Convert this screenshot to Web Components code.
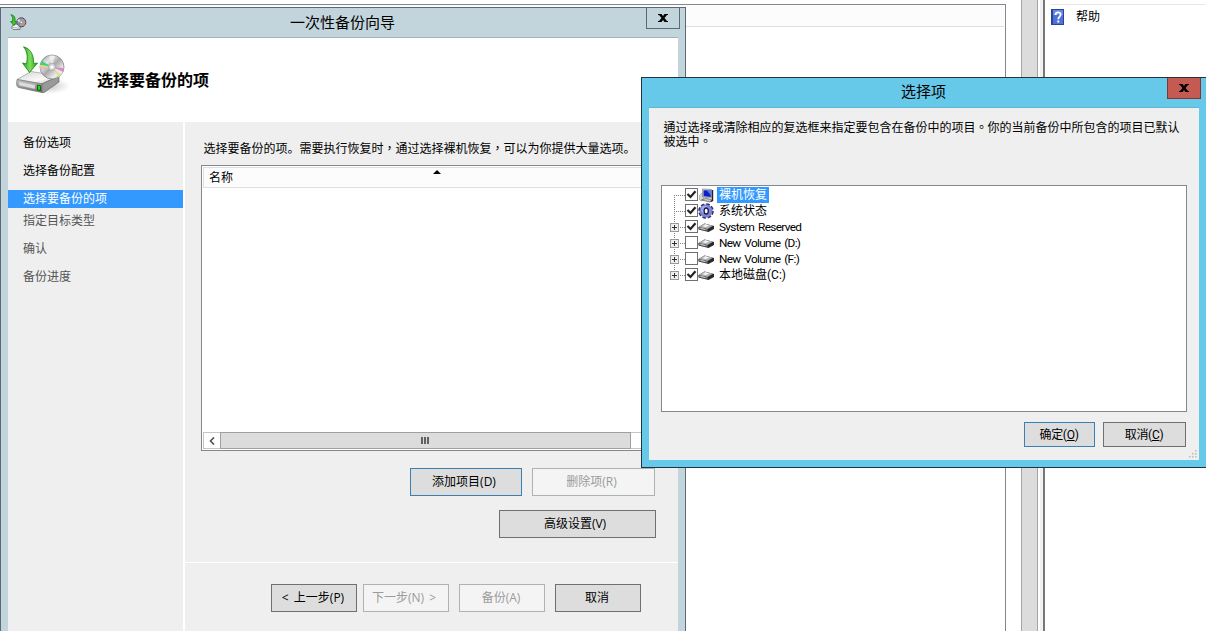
<!DOCTYPE html>
<html lang="zh-CN">
<head>
<meta charset="utf-8">
<title>一次性备份向导</title>
<style>
  body {
    margin: 0;
    width: 1206px;
    height: 631px;
    overflow: hidden;
    background: #fff;
    color: #000;
    font: 12px/16px "Open Sans", "Noto Sans CJK SC", sans-serif;
  }
</style>
</head>
<body>
<backup-desktop></backup-desktop>

<script>
class BaseElement extends HTMLElement {
  constructor() {
    super();
    this.attachShadow({ mode: 'open' });
  }

  connectedCallback() {
    this.shadowRoot.innerHTML = `
      <style>:host { display: block; box-sizing: border-box; } * { box-sizing: border-box; }</style>
      ${this.render()}
    `;
  }
}

class BackupIcon extends BaseElement {
  render() {
    return `
      <style>svg { display: block; width: 100%; height: 100%; }</style>
      <svg viewBox="0 0 54 54">
        <defs>
          <linearGradient id="disc" x1="0" y1="0" x2="1" y2="1">
            <stop offset="0" stop-color="#8d8d8d"/>
            <stop offset=".3" stop-color="#e6e6e6"/>
            <stop offset=".5" stop-color="#a9a9a9"/>
            <stop offset=".75" stop-color="#eee"/>
            <stop offset="1" stop-color="#8a8a8a"/>
          </linearGradient>
          <linearGradient id="top" x1="0" y1="0" x2="1" y2="1">
            <stop offset="0" stop-color="#d4d4d4"/>
            <stop offset=".6" stop-color="#fafafa"/>
            <stop offset="1" stop-color="#bbb"/>
          </linearGradient>
          <linearGradient id="front" x1="0" y1="0" x2="0" y2="1">
            <stop offset="0" stop-color="#c6c6c6"/>
            <stop offset=".5" stop-color="#9a9a9a"/>
            <stop offset="1" stop-color="#666"/>
          </linearGradient>
          <linearGradient id="leaf" x1="0" y1="0" x2="1" y2="0">
            <stop offset="0" stop-color="#1d9c1d"/>
            <stop offset=".5" stop-color="#7fe05a"/>
            <stop offset="1" stop-color="#1f9a20"/>
          </linearGradient>
          <radialGradient id="shade">
            <stop offset="0" stop-color="#999" stop-opacity=".6"/>
            <stop offset="1" stop-color="#999" stop-opacity="0"/>
          </radialGradient>
        </defs>
        <ellipse cx="31" cy="40" rx="23" ry="8" fill="url(#shade)"/>
        <path d="M1 33.500 15 25.500 43 30 26 37.800 Z" fill="url(#top)" stroke="#999" stroke-width=".7"/>
        <path d="M1 33.500 26 37.800 V46.500 L2.500 41.500 Q.5 40.500 .6 38 Z" fill="url(#front)" stroke="#777" stroke-width=".7"/>
        <path d="M26 37.800 43 30 V36 L28 46.500 H26 Z" fill="#999" stroke="#666" stroke-width=".7"/>
        <path d="M2.500 35.500 19 38.800 V43 L3 39.500 Z" fill="#ddd" stroke="#aaa" stroke-width=".5"/>
        <path d="M21.500 39 24.500 39.600 V44.500 L21.500 44 Z" fill="#24d818" stroke="#084f08" stroke-width=".8"/>
        <circle cx="36" cy="21" r="12" fill="url(#disc)" stroke="#858585" stroke-width=".8"/>
        <path d="M36 21 24.200 19 25.800 15 Z" fill="#39d47b"/>
        <path d="M36 21 24.100 21 24.200 18.800 Z" fill="#dfe259"/>
        <path d="M36 21 24.500 24 24.100 21 Z" fill="#e3b7dd"/>
        <path d="M36 21 48 22 46.800 26 Z" fill="#d78fc8"/>
        <path d="M36 21 46.800 26 45 29 Z" fill="#e8e8e8"/>
        <path d="M36 21 45 29 42.500 31 Z" fill="#dfe08f"/>
        <path d="M36 21 33 9.500 39 9.500 Z" fill="#fff" opacity=".5"/>
        <circle cx="36" cy="21" r="3.600" fill="#d5d5d5" stroke="#999" stroke-width=".6"/>
        <circle cx="36" cy="21" r="1.600" fill="#fff"/>
        <path d="M7.500 .8 C14 2.500 18 8 17.500 17.500 L21.500 17 13.500 26.500 6.500 17 10.500 17.800 C12 10 11 5 7.500 .8 Z" fill="url(#leaf)" stroke="#168316" stroke-width=".8"/>
      </svg>
    `;
  }
}
customElements.define('backup-icon', BackupIcon);

// 16px variant for the title bar
class BackupIconSmall extends BaseElement {
  render() {
    return `
      <style>
        :host { width: 17px; height: 17px; margin: 6px 0 0 2px; }
        svg { display: block; }
      </style>
      <svg width="17" height="17" viewBox="0 0 17 17">
        <path d="M2 12 6 10 13 11 10 13.500V15.500H3L2 14.500Z" fill="#f0f0f0" stroke="#666" stroke-width=".8"/>
        <path d="M2.500 13.500 9.500 14" stroke="#999" stroke-width=".7"/>
        <circle cx="11.300" cy="8.300" r="4.500" fill="#a39ea8" stroke="#47424c" stroke-width="1"/>
        <path d="M11.300 8.300 7 7 9 5Z" fill="#e8e8e8"/>
        <path d="M11.300 8.300 7 10 9 12Z" fill="#6b88c9"/>
        <path d="M11.300 8.300 15.500 8 14 12Z" fill="#d99077"/>
        <circle cx="11.300" cy="8.300" r="1.300" fill="#fff" stroke="#666" stroke-width=".6"/>
        <path d="M.8 .8C4.500 1 5.500 4 5 7.500H6.800L3.800 11.500 .6 7.500H2.500C3 4.500 2.500 2 .8 .8Z" fill="#3fc52f" stroke="#15801a" stroke-width=".8"/>
      </svg>
    `;
  }
}
customElements.define('backup-icon-small', BackupIconSmall);

class HelpIcon extends BaseElement {
  render() {
    return `
      <style>svg { display: block; }</style>
      <svg width="13" height="16" viewBox="0 0 13 16">
        <rect width="13" height="16" fill="#27459f"/>
        <rect x="2" y="1" width="10" height="14" fill="#4e72d6"/>
        <rect x="2" y="1" width="10" height="5" fill="#6788df"/>
        <path d="M4.500 6 C4.500 2.500 9.700 2.500 9.700 5.600 C9.700 7.700 7.300 7.700 7.300 10.300" fill="none" stroke="#fff" stroke-width="1.800"/>
        <rect x="6.300" y="11.500" width="2" height="2" fill="#fff"/>
      </svg>
    `;
  }
}
customElements.define('help-icon', HelpIcon);

class TreeIcon extends BaseElement {
  render() {
    const icons = {
      computer: `
        <path d="M1 8.500 5 4.500v8l-2 1.500-2-1Z" fill="#d5d5d5" stroke="#999" stroke-width=".6"/>
        <path d="M4 2 13 2.500 13 11 4 10 Z" fill="#dcdcdc" stroke="#888" stroke-width=".8"/>
        <path d="M5 3.300 12.300 3.500 12.300 10 5 9.300 Z" fill="#0d20c8"/>
        <path d="M8.500 3.400 12.300 3.500 12.300 8.500 Z" fill="#4f84ff"/>
        <path d="M14 3v10.500l-2 1" fill="none" stroke="#222" stroke-width="1.400"/>
        <path d="M3 13 7 11.500 13 12.500 11.500 15 Z" fill="#cacaca" stroke="#555" stroke-width=".7"/>`,
      gear: `
        <circle cx="7.500" cy="8" r="6.900" fill="none" stroke="#2c2e6b" stroke-width="1.800" stroke-dasharray="3.600 1.820"/>
        <circle cx="7.500" cy="8" r="6.200" fill="#7f86d6" stroke="#5e62b5" stroke-width=".6"/>
        <circle cx="6.300" cy="6.600" r="3.800" fill="#a3abf0"/>
        <ellipse cx="7.700" cy="8" rx="2.100" ry="3" fill="#fff" stroke="#17174a" stroke-width="1.300"/>`,
      drive: `
        <path d="M0 8 6 4.500 15.500 7 15.500 10 10 13 0 10.500 Z" fill="#2a2a2a"/>
        <path d="M0 8 6 4.500 14.500 6.800 9 10 Z" fill="#b0b0b0"/>
        <path d="M4 7 7 5.300 11 6.500 7 8.300 Z" fill="#f2f2f2"/>
        <path d="M0 8 9 10.300v1.800L0 10Z" fill="#777"/>
        <path d="M2 9.300 7 10.600" stroke="#ccc"/>`
    };
    return `
      <style>
        :host { width: 17px; height: 16px; }
        svg { display: block; }
      </style>
      <svg width="17" height="16" viewBox="-.5 0 17 16">${icons[this.getAttribute('name')]}</svg>
    `;
  }
}
customElements.define('tree-icon', TreeIcon);

class WinButton extends BaseElement {
  render() {
    return `
      <style>
        :host {
          width: var(--w, 86px);
          height: var(--h, 28px);
          flex: none;
          border: 1px solid #707070;
          background: #ddd;
          display: flex;
          align-items: center;
          justify-content: center;
          padding: var(--drop, 0) var(--shift, 2px) 0 0;
          white-space: pre;
          word-spacing: 2px;
        }
        :host([primary]) { border-color: #3c7fb1; }
        :host([disabled]) { border-color: #adb2b5; background: #f4f4f4; color: #9b9b9b; }
      </style>
      <span><slot></slot></span>
    `;
  }
}
customElements.define('win-button', WinButton);

// Window frame: title bar, optional icon, close button and the client area
class WinFrame extends BaseElement {
  render() {
    return `
      <style>
        :host {
          display: flex;
          flex-direction: column;
          border: 1px solid var(--edge);
          background: var(--frame);
          padding: 0 7px 7px;
        }
        header {
          display: grid;
          grid-template-columns: 67px 1fr 68px;
          height: 29px;
          flex: none;
          font-size: 15px;
          line-height: 29px;
        }
        h1 { margin: 0; font: inherit; text-align: center; }
        .close {
          justify-self: end;
          display: flex;
          align-items: center;
          justify-content: center;
          width: 34px;
          height: 21px;
          margin-right: -2px;
          border: 1px solid var(--close-edge);
          border-top: 0;
          background: var(--close);
        }
        main {
          flex: 1;
          min-height: 0;
          border-top: 1px solid var(--line);
          display: flex;
          flex-direction: column;
          background: #efefef;
        }
      </style>
      <header>
        <slot name="icon"><span></span></slot>
        <h1>${this.getAttribute('heading')}</h1>
        <div class="close">
          <svg width="10" height="8" viewBox="0 0 10 8"><path d="M0 0H3.500L5 2 6.500 0H10V1H9L6.500 4 9 7H10V8H6.500L5 6 3.500 8H0V7H1L3.500 4 1 1H0Z"/></svg>
        </div>
      </header>
      <main><slot></slot></main>
    `;
  }
}
customElements.define('win-frame', WinFrame);

class WizardSteps extends BaseElement {
  constructor() {
    super();
    this.steps = [
      { text: '备份选项', state: 'done' },
      { text: '选择备份配置', state: 'done' },
      { text: '选择要备份的项', state: 'current' },
      { text: '指定目标类型', state: 'next' },
      { text: '确认', state: 'next' },
      { text: '备份进度', state: 'next' }
    ];
  }

  render() {
    return `
      <style>
        :host { padding-top: 12px; border-right: 2px solid #fff; }
        div { height: 18px; margin-bottom: 10px; padding-left: 15px; line-height: 17px; }
        .current { background: #39f; color: #fff; margin-bottom: 4px; }
        .next { color: #555; }
      </style>
      ${this.steps.map(step => `<div class="${step.state}">${step.text}</div>`).join('')}
    `;
  }
}
customElements.define('wizard-steps', WizardSteps);

class ItemList extends BaseElement {
  render() {
    return `
      <style>
        :host {
          display: flex;
          flex-direction: column;
          justify-content: space-between;
          height: 286px;
          border: 1px solid #828790;
          background: #fff;
          padding: 1px;
        }
        .head {
          position: relative;
          height: 21px;
          border: 1px solid #dedfe1;
          background: #fcfcfc;
          padding-left: 5px;
          line-height: 20px;
        }
        .sort { position: absolute; left: 229px; top: 2px; display: block; }
        .bar { display: flex; height: 17px; border: 1px solid #c5c5c5; }
        .arrow { width: 16px; display: flex; align-items: center; justify-content: center; }
        .thumb {
          width: 411px;
          margin: -1px 0;
          border: 1px solid #a0a0a0;
          background: #dcdcdc;
          display: flex;
          align-items: center;
          justify-content: center;
          padding-right: 2px;
          gap: 1px;
        }
        .thumb i { width: 2px; height: 7px; background: #606060; }
      </style>
      <div class="head">名称
        <svg class="sort" width="8" height="4"><path d="M0 4 4 0 8 4Z"/></svg>
      </div>
      <div class="bar">
        <div class="arrow"><svg width="6" height="8"><path d="M5 .5 1.500 4 5 7.500" fill="none" stroke="#505050" stroke-width="1.600"/></svg></div>
        <div class="thumb"><i></i><i></i><i></i></div>
      </div>
    `;
  }
}
customElements.define('item-list', ItemList);

class BackupWizard extends BaseElement {
  render() {
    return `
      <style>
        win-frame {
          height: 100%;
          --edge: #5d6a73;
          --frame: #c3d5dc;
          --line: #a5b4ba;
          --close: #c3d5dc;
          --close-edge: #5d6a73;
        }
        .banner {
          display: flex;
          align-items: center;
          height: 84px;
          flex: none;
          background: #fff;
        }
        .banner backup-icon { width: 54px; height: 54px; margin: -14px 27px 0 8px; }
        h2 { margin: 0; font-size: 16px; line-height: 22px; }
        .body { flex: 1; display: grid; grid-template-columns: 177px 1fr; }
        .page { display: flex; flex-direction: column; }
        .work { height: 441px; padding: 19px 15px 0 16px; border-bottom: 1px solid #fff; }
        p { margin: 0 0 8px 2.500px; white-space: nowrap; }
        .mid { font-family: "Noto Sans CJK TC", sans-serif; line-height: 1; }
        .row { display: flex; justify-content: flex-end; gap: 10px; margin: 17px 8px 0 0; }
        .row + .row { margin: 14px 7px 0 0; }
        .foot { display: flex; gap: 10px; padding: 21px 0 0 86px; }
        .foot :first-child { margin-right: -4px; }
      </style>
      <win-frame heading="一次性备份向导">
        <backup-icon-small slot="icon"></backup-icon-small>
        <div class="banner"><backup-icon></backup-icon><h2>选择要备份的项</h2></div>
        <div class="body">
          <wizard-steps></wizard-steps>
          <div class="page">
            <div class="work">
              <p>选择要备份的项。需要执行恢复时<span class="mid" lang="zh-TW">，</span>通过选择裸机恢复<span class="mid" lang="zh-TW">，</span>可以为你提供大量选项。</p>
              <item-list></item-list>
              <div class="row">
                <win-button primary style="--w: 112px; --shift: 4px">添加项目(D)</win-button>
                <win-button disabled style="--w: 123px; --shift: 4px">删除项(R)</win-button>
              </div>
              <div class="row"><win-button style="--w: 157px; --shift: 5px">高级设置(V)</win-button></div>
            </div>
            <div class="foot">
              <win-button>&lt; 上一步(P)</win-button>
              <win-button disabled style="--shift: 4px">下一步(N) &gt;</win-button>
              <win-button disabled>备份(A)</win-button>
              <win-button>取消</win-button>
            </div>
          </div>
        </div>
      </win-frame>
    `;
  }
}
customElements.define('backup-wizard', BackupWizard);

class ItemTree extends BaseElement {
  constructor() {
    super();
    this.items = [
      { text: '裸机恢复', icon: 'computer', checked: true, selected: true },
      { text: '系统状态', icon: 'gear', checked: true },
      { text: 'System Reserved', icon: 'drive', checked: true, expand: true },
      { text: 'New Volume (D:)', icon: 'drive', expand: true },
      { text: 'New Volume (F:)', icon: 'drive', expand: true },
      { text: '本地磁盘(C:)', icon: 'drive', checked: true, expand: true }
    ];
  }

  render() {
    return `
      <style>
        :host {
          height: 227px;
          border: 1px solid #828790;
          background: #fff;
          padding: 1px 8px;
        }
        .row { display: flex; align-items: center; height: 16px; }
        .lines { width: 15px; height: 16px; flex: none; }
        .box {
          width: 13px;
          height: 13px;
          flex: none;
          margin-bottom: 1px;
          border: 1px solid #707070;
          background: #fff;
        }
        .box svg { display: block; }
        .text { margin-left: 2px; padding: 0 2px; height: 16px; line-height: 17px; white-space: nowrap; }
        .latin { font-size: 11.800px; letter-spacing: -.650px; word-spacing: 1.500px; line-height: 16px; }
        .selected { background: #39f; color: #fff; }
      </style>
      ${this.items.map((item, i) => `
        <div class="row">
          <svg class="lines" width="15" height="16">
            <path d="M4.500 ${i === 0 ? 8 : 0}V${i === this.items.length - 1 ? 8 : 16}M4 8.500H15" stroke="#808080" stroke-dasharray="1 1"/>
            ${item.expand ? '<rect x=".5" y="4.500" width="8" height="8" fill="#eee" stroke="#999"/><path d="M2 8.500h5M4.500 6v5" stroke="#333"/>' : ''}
          </svg>
          <div class="box">${item.checked ? '<svg width="11" height="11"><path d="M1.500 5 4.500 8 9.500 2.200" fill="none" stroke="#222" stroke-width="2.200"/></svg>' : ''}</div>
          <tree-icon name="${item.icon}"></tree-icon>
          <span class="text ${item.selected ? 'selected' : ''} ${/^[A-Z]/.test(item.text) ? 'latin' : ''}">${item.text}</span>
        </div>
      `).join('')}
    `;
  }
}
customElements.define('item-tree', ItemTree);

class SelectDialog extends BaseElement {
  render() {
    return `
      <style>
        :host { font-family: Roboto, "Noto Sans CJK SC", sans-serif; }
        win-frame {
          height: 100%;
          --edge: #20343d;
          --frame: #66c9e9;
          --line: #60b5d0;
          --close: #c45a51;
          --close-edge: #7c3934;
        }
        p {
          margin: 0;
          height: 77px;
          padding: 13px 0 0 14.500px;
          line-height: 14px;
          white-space: nowrap;
          font-family: Roboto, "Noto Sans CJK TC", sans-serif;
        }
        item-tree { margin: 0 12px; }
        .actions { display: flex; justify-content: flex-end; gap: 8px; padding: 10px 13px 0; }
        .grip { display: block; margin: 0 2px 0 auto; }
        win-button { --shift: 1px; --drop: 1px; letter-spacing: -.3px; }
      </style>
      <win-frame heading="选择项">
        <p lang="zh-TW">通过选择或清除相应的复选框来指定要包含在备份中的项目。你的当前备份中所包含的项目已默认<br>被选中。</p>
        <item-tree></item-tree>
        <div class="actions">
          <win-button primary style="--w: 71px; --h: 25px">确定(<u>O</u>)</win-button>
          <win-button style="--w: 83px; --h: 25px">取消(<u>C</u>)</win-button>
        </div>
        <svg class="grip" width="8" height="12" fill="#bbb">
          <path d="M6 3h1.500v1.500H6zM3 6h1.500v1.500H3zM6 6h1.500v1.500H6zM0 9h1.500v1.500H0zM3 9h1.500v1.500H3zM6 9h1.500v1.500H6z"/>
        </svg>
      </win-frame>
    `;
  }
}
customElements.define('select-dialog', SelectDialog);

// Console behind the windows: result list, scrollbar and the actions pane
class BackupConsole extends BaseElement {
  render() {
    return `
      <style>
        :host {
          display: grid;
          grid-template-columns: 1006px 15px 17px 5px 1fr;
          height: 631px;
        }
        .list { margin-top: 4px; border: solid #828790; border-width: 1px 1px 0 0; }
        .head { height: 22px; margin-right: 1px; background: #fcfcfc; border-bottom: 1px solid #dedfe1; }
        .scroll { border: solid #a5a5a5; border-width: 0 1px; background: #dcdcdc; }
        .split { background: #f0f0f0; border-left: 2px solid #fff; }
        .pane { border-left: 2px solid #777; }
        .help {
          display: flex;
          gap: 12px;
          margin: 4px 0 0 6px;
          padding-top: 4px;
          border-top: 1px solid #e8e8e8;
        }
      </style>
      <div class="list"><div class="head"></div></div>
      <div></div>
      <div class="scroll"></div>
      <div class="split"></div>
      <div class="pane"><div class="help"><help-icon></help-icon><span>帮助</span></div></div>
    `;
  }
}
customElements.define('backup-console', BackupConsole);

class BackupDesktop extends BaseElement {
  render() {
    return `
      <style>
        :host { position: relative; height: 631px; overflow: hidden; }
        backup-wizard { position: absolute; left: 0; top: 7px; width: 686px; height: 660px; }
        select-dialog { position: absolute; left: 641px; top: 77px; width: 566px; height: 391px; }
      </style>
      <backup-console></backup-console>
      <backup-wizard></backup-wizard>
      <select-dialog></select-dialog>
    `;
  }
}
customElements.define('backup-desktop', BackupDesktop);
</script>
</body>
</html>
